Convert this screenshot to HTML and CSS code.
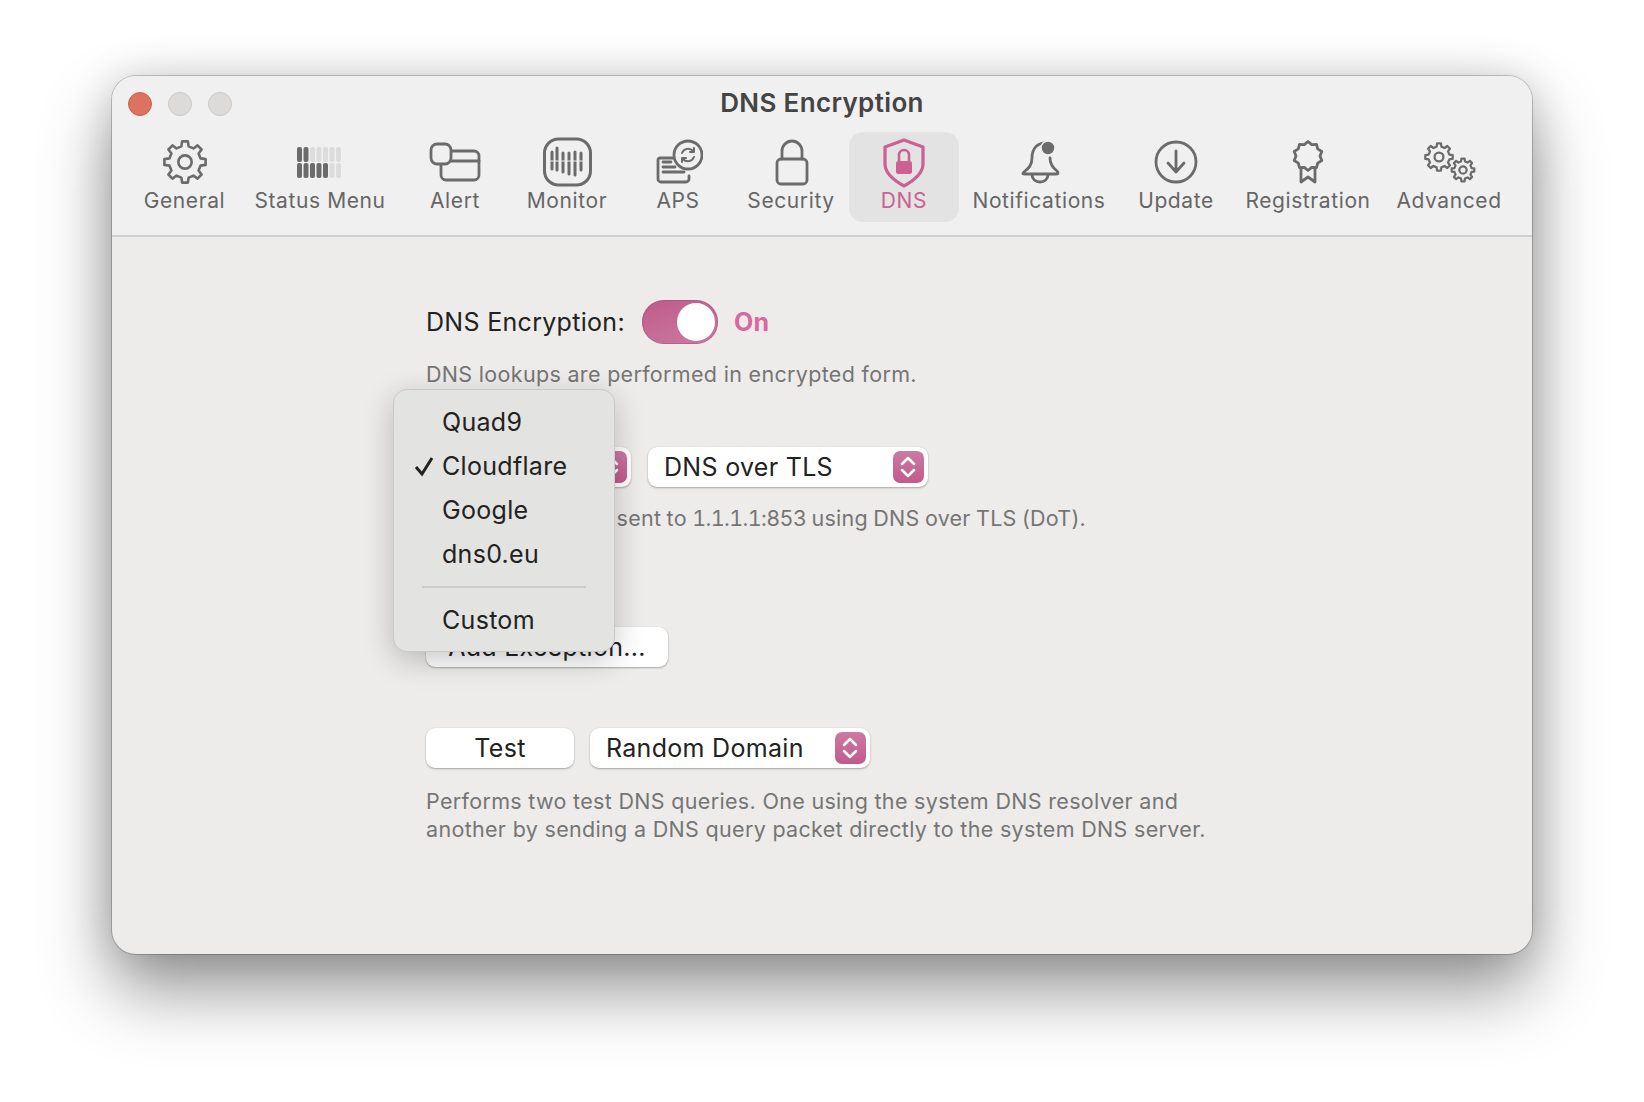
FILE: index.html
```html
<!DOCTYPE html>
<html lang="en">

<head>
    <meta charset="UTF-8">
    <meta name="viewport" content="width=device-width, initial-scale=1.0">
    <title>DNS Encryption</title>
    <link rel="stylesheet" href="styles.css">
</head>

<body>
    <svg class="defs" width="0" height="0">
        <defs>
            <g id="gear">
                <polygon points="-1.73,-7.5 -1.39,-9.9 1.39,-9.9 1.73,-7.5 4.08,-6.53 6.02,-7.98 7.98,-6.02 6.53,-4.08 7.5,-1.73 9.9,-1.39 9.9,1.39 7.5,1.73 6.53,4.08 7.98,6.02 6.02,7.98 4.08,6.53 1.73,7.5 1.39,9.9 -1.39,9.9 -1.73,7.5 -4.08,6.53 -6.02,7.98 -7.98,6.02 -6.53,4.08 -7.5,1.73 -9.9,1.39 -9.9,-1.39 -7.5,-1.73 -6.53,-4.08 -7.98,-6.02 -6.02,-7.98 -4.08,-6.53" />
                <circle r="3.2" />
            </g>
            <g id="updown">
                <path d="M9 13l6-6 6 6M9 19l6 6 6-6" />
            </g>
        </defs>
    </svg>

    <div class="window">
        <div class="titlebar">
            <div class="lights">
                <span class="light red"></span>
                <span class="light"></span>
                <span class="light"></span>
            </div>
            <div class="title">DNS Encryption</div>
        </div>

        <div class="toolbar">
            <div class="tool">
                <svg class="ico" width="46" height="52">
                    <g transform="translate(23 26) scale(2.08)" stroke-width="1.25"><use href="#gear" /></g>
                </svg>
                <span>General</span>
            </div>
            <div class="tool">
                <svg class="ico" width="46" height="52">
                    <g class="bars-off">
                        <rect x="13" y="11" width="5" height="15" rx="2" />
                        <rect x="19.5" y="11" width="5" height="15" rx="2" />
                        <rect x="26" y="11" width="5" height="15" rx="2" />
                        <rect x="32.500" y="11" width="5" height="15" rx="2" />
                        <rect x="39" y="11" width="5" height="15" rx="2" />
                        <rect x="32.500" y="27" width="5" height="15" rx="2" />
                        <rect x="39" y="27" width="5" height="15" rx="2" />
                    </g>
                    <g class="bars-on">
                        <rect x="0" y="11" width="5" height="15" rx="2" />
                        <rect x="6.500" y="11" width="5" height="15" rx="2" />
                        <rect x="0" y="27" width="5" height="15" rx="2" />
                        <rect x="6.500" y="27" width="5" height="15" rx="2" />
                        <rect x="13" y="27" width="5" height="15" rx="2" />
                        <rect x="19.5" y="27" width="5" height="15" rx="2" />
                        <rect x="26" y="27" width="5" height="15" rx="2" />
                    </g>
                </svg>
                <span>Status Menu</span>
            </div>
            <div class="tool">
                <svg class="ico" width="52" height="52">
                    <rect x="12" y="15" width="38" height="29" rx="5" />
                    <path d="M22 25h28" />
                    <rect x="2" y="8" width="20" height="20" rx="6" class="bg-fill" />
                </svg>
                <span>Alert</span>
            </div>
            <div class="tool">
                <svg class="ico" width="50" height="52">
                    <rect x="2.500" y="3" width="46" height="46" rx="14" stroke-width="3" />
                    <path class="wave" d="M10 16v17M15 12v22M21 17v19M27 17v21M33 16v23M39 17v17" />
                    <path class="wave-gap" d="M7 25h36" />
                </svg>
                <span>Monitor</span>
            </div>
            <div class="tool">
                <svg class="ico" width="50" height="52">
                    <path d="M22 22H7a2 2 0 0 0-2 2v19a3 3 0 0 0 3 3h25a3 3 0 0 0 3-3v-3" />
                    <path d="M10 26h8M10 31h12M10 36h21" />
                    <circle cx="35" cy="19" r="14" class="bg-fill" />
                    <path class="thin" d="M29 17a6.500 6.500 0 0 1 11-2l1 1M41 21a6.500 6.500 0 0 1-11 2l-1-1M41 12v4h-4M29 26v-4h4" />
                </svg>
                <span>APS</span>
            </div>
            <div class="tool">
                <svg class="ico" width="36" height="52">
                    <rect x="4" y="23" width="30" height="25" rx="4" />
                    <path d="M9 23V15a10 10 0 0 1 20 0v8" />
                </svg>
                <span>Security</span>
            </div>
            <div class="tool selected">
                <svg class="ico pink" width="42" height="52">
                    <path stroke-width="3.200" d="M21 4l19 7v17c0 10-10 17-19 22C12 45 2 38 2 28V11z" />
                    <rect class="pink-fill" x="13" y="25" width="16" height="13" rx="2.500" />
                    <path stroke-width="2.600" d="M16 26v-7a5 5 0 0 1 10 0v7" />
                </svg>
                <span>DNS</span>
            </div>
            <div class="tool">
                <svg class="ico" width="44" height="52">
                    <path d="M27 7C19 8 15 14 15 22c0 7-3 10-8 14-2 2-1 2 1 2h31c2 0 3-1 1-3-4-3-7-7-7-13" />
                    <path d="M15 39a8 7 0 0 0 16 0" />
                    <circle class="dark-fill" cx="31" cy="12" r="7" />
                </svg>
                <span>Notifications</span>
            </div>
            <div class="tool">
                <svg class="ico" width="46" height="52">
                    <circle cx="23" cy="26" r="20" />
                    <path d="M23 15v21M15 27l8 9 8-9" />
                </svg>
                <span>Update</span>
            </div>
            <div class="tool">
                <svg class="ico" width="34" height="52">
                    <g transform="translate(1 5)">
                        <polygon points="16,0.5 19.7,3.6 24.5,3.3 25.7,7.9 29.8,10.5 28,15 29.8,19.5 25.7,22.1 24.5,26.7 19.7,26.4 16,29.5 12.3,26.4 7.5,26.7 6.3,22.1 2.2,19.5 4,15 2.2,10.5 6.3,7.9 7.5,3.3 12.3,3.6" />
                        <path d="M9 27v14l7-5 7 5V27" />
                    </g>
                </svg>
                <span>Registration</span>
            </div>
            <div class="tool">
                <svg class="ico" width="54" height="52">
                    <g transform="translate(17 21) scale(1.38)" stroke-width="1.65"><use href="#gear" /></g>
                    <g transform="translate(41 34) scale(1.14)" stroke-width="1.95"><use href="#gear" /></g>
                </svg>
                <span>Advanced</span>
            </div>
        </div>

        <div class="content">
            <div class="row">
                <span class="label">DNS Encryption:</span>
                <div class="toggle"><span class="knob"></span></div>
                <span class="state">On</span>
            </div>
            <p class="desc first">DNS lookups are performed in encrypted form.</p>

            <div class="row selects">
                <div class="popup provider">
                    <span>Cloudflare</span>
                    <span class="stepper"><svg width="30" height="32"><use href="#updown" /></svg></span>
                </div>
                <div class="popup protocol">
                    <span>DNS over TLS</span>
                    <span class="stepper"><svg width="30" height="32"><use href="#updown" /></svg></span>
                </div>
            </div>
            <p class="desc second">DNS requests are sent to <span class="addr">1.1.1.1:853</span> using DNS over TLS (DoT).</p>

            <button class="btn exception">Add Exception...</button>

            <div class="row test-row">
                <button class="btn test">Test</button>
                <div class="popup domain">
                    <span>Random Domain</span>
                    <span class="stepper"><svg width="30" height="32"><use href="#updown" /></svg></span>
                </div>
            </div>
            <p class="desc third">Performs two test DNS queries. One using the system DNS resolver and<br>another by sending a DNS query packet directly to the system DNS server.</p>

            <div class="menu">
                <div class="menu-item">Quad9</div>
                <div class="menu-item checked">
                    <svg class="check" width="22" height="22"><path d="M3 12l6 7L19 3" /></svg>
                    Cloudflare
                </div>
                <div class="menu-item">Google</div>
                <div class="menu-item">dns0.eu</div>
                <div class="menu-sep"></div>
                <div class="menu-item">Custom</div>
            </div>
        </div>
    </div>
</body>

</html>
```

FILE: styles.css
```css
* {
    padding: 0;
    margin: 0;
    box-sizing: border-box;
}

body {
    background-color: #fff;
    font-family: Inter, "Noto Sans", sans-serif;
    padding: 76px 112px 0;
    height: 1102px;
    overflow: hidden;
}

.defs {
    position: absolute;
}

.window {
    width: 1420px;
    height: 878px;
    border-radius: 24px;
    background-color: #edecea;
    box-shadow: 0 0 0 1px rgba(0, 0, 0, .2), 0 36px 70px rgba(0, 0, 0, .42), 0 0 40px rgba(0, 0, 0, .14);
    overflow: hidden;
}

.titlebar {
    display: grid;
    grid-template-columns: 1fr auto 1fr;
    align-items: center;
    height: 56px;
    padding: 0 16px;
    background-color: #f0f0f0;
}

.lights {
    display: flex;
    gap: 16px;
}

.light {
    width: 24px;
    height: 24px;
    border-radius: 50%;
    background-color: #dcdbd9;
    border: 1px solid #c8c7c5;
}

.red {
    background-color: #dc7360;
    border-color: #c9604e;
}

.title {
    font-size: 26px;
    font-weight: 600;
    letter-spacing: .35px;
    margin-top: -3px;
    color: #444;
}

.toolbar {
    display: grid;
    grid-template-columns: 113px 158px 112px 112px 110px 116px 110px 160px 114px 150px 132px;
    height: 105px;
    padding-left: 16px;
    background-color: #f0f0f0;
    border-bottom: 2px solid #cfcfcf;
}

.tool {
    display: flex;
    flex-direction: column;
    align-items: center;
    height: 90px;
    padding-top: 4px;
    border-radius: 14px;
    font-size: 21px;
    letter-spacing: .6px;
    line-height: 26px;
    color: #666;
}

.selected {
    background-color: #e3e3e3;
    color: #cd5f93;
}

.ico {
    display: block;
    fill: none;
    stroke: #6b6b6b;
    stroke-width: 2.800;
    stroke-linecap: round;
    stroke-linejoin: round;
}

.bars-on {
    fill: #6b6b6b;
    stroke: none;
}

.bars-off {
    fill: #dcdcdc;
    stroke: none;
}

.bg-fill {
    fill: #f0f0f0;
}

.wave {
    stroke-width: 3;
}

.wave-gap {
    stroke: #f0f0f0;
    stroke-width: 1;
    stroke-linecap: butt;
}

.thin {
    stroke-width: 2;
}

.dark-fill {
    fill: #6b6b6b;
    stroke: #f0f0f0;
    stroke-width: 1.500;
}

.pink {
    stroke: #cd5f93;
}

.pink-fill {
    fill: #cd5f93;
    stroke: none;
}

.content {
    position: relative;
    padding: 63px 0 0 314px;
}

.row {
    display: flex;
    align-items: center;
}

.label {
    font-size: 25px;
    letter-spacing: .3px;
    color: #222;
}

.toggle {
    width: 76px;
    height: 44px;
    margin-left: 17px;
    padding: 3px;
    display: flex;
    justify-content: flex-end;
    border-radius: 22px;
    background: linear-gradient(160deg, #bf5b8a, #cb7aa2);
    box-shadow: inset 0 0 0 1px rgba(150, 60, 100, .35);
}

.knob {
    width: 38px;
    height: 38px;
    border-radius: 50%;
    background-color: #fff;
}

.state {
    margin-left: 16px;
    font-size: 25px;
    font-weight: 700;
    letter-spacing: .3px;
    color: #d9689f;
}

.desc {
    font-size: 21.500px;
    letter-spacing: .32px;
    line-height: 28px;
    color: #757575;
}

.first {
    margin-top: 16px;
}

.selects {
    margin-top: 59px;
    gap: 17px;
}

.second {
    margin-top: 17px;
    padding-left: 5px;
    word-spacing: -1px;
    letter-spacing: .26px;
}

.addr {
    font-variant-numeric: tabular-nums;
    letter-spacing: -.6px;
}

.popup,
.btn {
    height: 40px;
    border: none;
    border-radius: 9px;
    background-color: #fff;
    box-shadow: 0 1px 2px rgba(0, 0, 0, .3), 0 0 1px rgba(0, 0, 0, .15);
    font-family: inherit;
    font-size: 25px;
    letter-spacing: .3px;
    color: #222;
}

.popup {
    display: flex;
    align-items: center;
    justify-content: space-between;
    padding: 0 4px 0 16px;
}

.provider {
    width: 205px;
}

.protocol {
    width: 280px;
}

.domain {
    width: 280px;
}

.stepper {
    width: 31px;
    height: 32px;
    border-radius: 7px;
    background: linear-gradient(#cb7ba3, #c25a8b);
    fill: none;
    stroke: #fff;
    stroke-width: 2.500;
    stroke-linecap: round;
    stroke-linejoin: round;
}

.stepper svg {
    display: block;
}

.btn {
    display: block;
}

.exception {
    width: 242px;
    margin-top: 95px;
}

.test-row {
    margin-top: 61px;
    gap: 16px;
}

.test {
    width: 148px;
}

.third {
    margin-top: 19px;
}

.menu {
    position: absolute;
    left: 281px;
    top: 152px;
    width: 222px;
    height: 263px;
    padding-top: 11px;
    border-radius: 14px;
    background-color: #e3e3e1;
    border: 1px solid #c9c9c7;
    box-shadow: 0 8px 30px rgba(0, 0, 0, .22);
    font-size: 25px;
    letter-spacing: .3px;
    color: #222;
}

.menu-item {
    position: relative;
    height: 44px;
    line-height: 43px;
    padding-left: 48px;
}

.check {
    position: absolute;
    left: 19px;
    top: 10px;
    fill: none;
    stroke: #222;
    stroke-width: 3;
}

.menu-sep {
    height: 2px;
    margin: 9px 28px 11px;
    background-color: #cdcdcb;
}
```
